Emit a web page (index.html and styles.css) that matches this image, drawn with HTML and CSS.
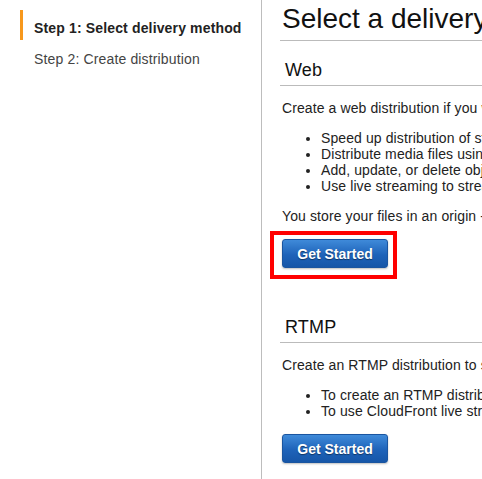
FILE: index.html
```html
<!DOCTYPE html>
<html lang="en">
<head>
    <meta charset="UTF-8">
    <meta name="viewport" content="width=device-width, initial-scale=1.0">
    <title>CloudFront - Create Distribution</title>
    <link rel="stylesheet" href="styles.css">
</head>
<body>
    <div class="wizard">
        <nav class="steps">
            <div class="step active">Step 1: Select delivery method</div>
            <div class="step">Step 2: Create distribution</div>
        </nav>
        <main class="content">
            <h1>Select a delivery method for your content.</h1>

            <section class="method">
                <h2>Web</h2>
                <p>Create a web distribution if you want to:</p>
                <ul>
                    <li>Speed up distribution of static and dynamic content, for example, .html, .css, .php, and graphics files.</li>
                    <li>Distribute media files using HTTP or HTTPS.</li>
                    <li>Add, update, or delete objects, and submit data from web forms.</li>
                    <li>Use live streaming to stream an event in real time.</li>
                </ul>
                <p>You store your files in an origin - either an Amazon S3 bucket or a web server. After you create the distribution, you can add more origins to the distribution.</p>
                <div class="action highlighted">
                    <button class="btn-start">Get Started</button>
                </div>
            </section>

            <section class="method">
                <h2>RTMP</h2>
                <p>Create an RTMP distribution to speed up distribution of your streaming media files using Adobe Flash Media Server's RTMP protocol.</p>
                <ul>
                    <li>To create an RTMP distribution, you must store the media files in an Amazon S3 bucket.</li>
                    <li>To use CloudFront live streaming, create a web distribution.</li>
                </ul>
                <div class="action">
                    <button class="btn-start">Get Started</button>
                </div>
            </section>
        </main>
    </div>
</body>
</html>
```

FILE: styles.css
```css
html, body {
    overflow: hidden;
}
body {
    font-family: "Liberation Sans", Arial, sans-serif;
    font-size: 14px;
    line-height: 16px;
    margin: 0;
    padding: 0;
    background-color: #fff;
    color: #222;
}
.wizard {
    display: flex;
    min-height: 100vh;
}
.steps {
    flex: 0 0 262px;
    border-right: 1px solid #bdbdbd;
    padding-top: 10px;
    box-sizing: border-box;
}
.step {
    margin-left: 20px;
    padding-left: 11px;
    border-left: 3px solid transparent;
    color: #444;
    height: 30px;
    padding-top: 10px;
    box-sizing: border-box;
    letter-spacing: 0.15px;
}
.step.active {
    border-left-color: #f7981d;
    color: #222;
    font-weight: bold;
}
.step + .step {
    height: auto;
    padding-top: 11px;
}
.content {
    flex: 0 0 900px;
    padding-left: 20px;
}
h1 {
    font-size: 28px;
    font-weight: normal;
    line-height: 32px;
    color: #111;
    margin: 3px 0 0 -2px;
    padding: 0 0 5px 2px;
    border-bottom: 1px solid #bbb;
    white-space: nowrap;
}
h2 {
    font-size: 18px;
    font-weight: normal;
    line-height: 22px;
    color: #111;
    margin: 18px 0 0 -2px;
    padding: 0 0 4px 5px;
    border-bottom: 1px solid #bbb;
    letter-spacing: 0.2px;
}
.method + .method h2 {
    margin-top: 48px;
}
p, ul {
    letter-spacing: 0.1px;
    white-space: nowrap;
}
p {
    margin: 14px 0 0;
}
ul {
    margin: 14px 0 0;
    padding-left: 39px;
}
.action {
    margin-top: 15px;
}
.highlighted {
    position: relative;
    display: inline-block;
}
.highlighted::after {
    content: "";
    position: absolute;
    left: -12px;
    top: -8px;
    right: -9px;
    bottom: -11px;
    border: 4px solid #f00;
}
.btn-start {
    display: block;
    width: 106px;
    height: 29px;
    padding: 0;
    font-family: "Liberation Sans", Arial, sans-serif;
    font-size: 14px;
    font-weight: bold;
    color: #fff;
    text-shadow: 0 1px 1px rgba(0, 0, 0, 0.45);
    background: linear-gradient(#3f8ad9, #1e63b9 55%, #1656a8);
    border: 1px solid #1a55a0;
    border-radius: 3px;
    box-shadow: 0 1px 2px rgba(0, 0, 0, 0.25);
    cursor: pointer;
}
.btn-start:hover {
    background: linear-gradient(#4b95e2, #1656a8);
}
```
